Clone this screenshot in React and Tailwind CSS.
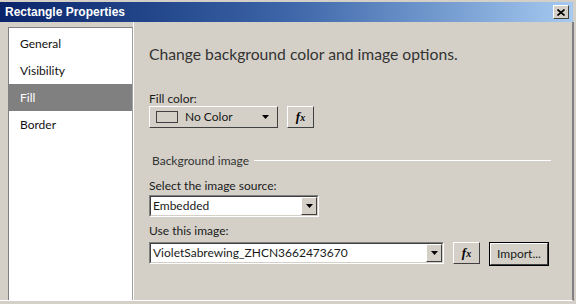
import React from "react";

const font = { fontFamily: 'Lato, "Open Sans", sans-serif' };

const FxButton = () => (
  <button
    type="button"
    className="w-[27px] h-[22px] bg-[#d4d0c8] border border-t-white border-l-white border-r-[#404040] border-b-[#404040] flex items-center justify-center"
  >
    <span className="font-['Liberation_Serif'] italic font-bold text-[13px] leading-none text-black">
      f<span className="text-[10px]">x</span>
    </span>
  </button>
);

const Arrow = () => (
  <svg width="7" height="4" viewBox="0 0 7 4">
    <path d="M0 0h7L3.5 4z" fill="#000" />
  </svg>
);

const ComboArrow = () => (
  <div className="w-[16px] h-full bg-[#d4d0c8] border border-t-white border-l-white border-r-[#404040] border-b-[#404040] flex items-center justify-center">
    <Arrow />
  </div>
);

const App = () => {
  const items = ["General", "Visibility", "Fill", "Border"];

  return (
    <div
      className="w-[576px] h-[304px] bg-[#d4d0c8] flex flex-col overflow-hidden text-[12px] text-[#1a1a1a]"
      style={font}
    >
      {/* Title bar */}
      <div className="h-[20px] mt-[2px] mr-[3px] flex items-center justify-between pl-[5px] pr-[4px] bg-gradient-to-r from-[#0a246a] via-[#3d65a8] to-[#a6caf0]">
        <span className="text-white font-bold text-[12px] font-['Liberation_Sans']">
          Rectangle Properties
        </span>
        <button
          type="button"
          className="w-[16px] h-[14px] bg-[#d4d0c8] border border-t-white border-l-white border-r-[#404040] border-b-[#404040] flex items-center justify-center"
        >
          <svg width="8" height="7" viewBox="0 0 8 7">
            <path d="M0.5 0.5l7 6M7.5 0.5l-7 6" stroke="#000" strokeWidth="1.6" />
          </svg>
        </button>
      </div>

      {/* Body */}
      <div className="flex-1 flex mr-[2px] border-r-[2px] border-r-[#808080] border-b border-b-white mb-[3px]">
        {/* Sidebar */}
        <div className="w-[125px] ml-[8px] mt-[5px] bg-white border-t border-l border-[#808080] border-r border-r-[#a0a0a0] pt-[2px]">
          {items.map((item) => (
            <div
              key={item}
              className={`h-[27px] flex items-center pl-[11px] ${
                item === "Fill" ? "bg-[#808080] text-white" : "text-[#111]"
              }`}
            >
              {item}
            </div>
          ))}
        </div>

        {/* Content */}
        <div className="flex-1 pl-[15px] pt-[25px] pr-[20px] border-l border-l-white">
          <div className="text-[15.7px] text-[#333] leading-none">
            Change background color and image options.
          </div>

          <div className="mt-[30px] leading-none">Fill color:</div>
          <div className="flex gap-[9px] mt-[1px]">
            <button
              type="button"
              className="w-[129px] h-[22px] bg-[#d4d0c8] border border-t-white border-l-white border-r-[#404040] border-b-[#404040] flex items-center pl-[6px] pr-[8px]"
            >
              <span className="w-[22px] h-[12px] border border-[#404040]" />
              <span className="ml-[7px] text-[#1a1a1a]">No Color</span>
              <span className="ml-auto">
                <Arrow />
              </span>
            </button>
            <FxButton />
          </div>

          <div className="flex items-center mt-[24px] pl-[3px]">
            <span className="text-[#333]">Background image</span>
            <div className="flex-1 h-px bg-[#a0a0a0] ml-[5px] mr-[1px] border-b border-b-white" />
          </div>

          <div className="mt-[10px] leading-none">Select the image source:</div>
          <div className="mt-[3px] w-[170px] h-[22px] bg-white border border-t-[#808080] border-l-[#808080] border-r-white border-b-white">
            <div className="h-full flex border border-t-[#404040] border-l-[#404040] border-r-[#d4d0c8] border-b-[#d4d0c8]">
              <span className="flex-1 pl-[2px] leading-[18px]">Embedded</span>
              <ComboArrow />
            </div>
          </div>

          <div className="mt-[8px] leading-none">Use this image:</div>
          <div className="flex items-start gap-[9px] mt-[5px]">
            <div className="w-[295px] h-[22px] bg-white border border-t-[#808080] border-l-[#808080] border-r-white border-b-white">
              <div className="h-full flex border border-t-[#404040] border-l-[#404040] border-r-[#d4d0c8] border-b-[#d4d0c8]">
                <span className="flex-1 pl-[2px] leading-[18px]">VioletSabrewing_ZHCN3662473670</span>
                <ComboArrow />
              </div>
            </div>
            <FxButton />
            <div className="border border-black">
              <button
                type="button"
                className="w-[58px] h-[22px] bg-[#d4d0c8] border border-t-white border-l-white border-r-[#404040] border-b-[#404040] text-[#1a1a1a]"
              >
                Import...
              </button>
            </div>
          </div>
        </div>
      </div>
    </div>
  );
};

export default App;
